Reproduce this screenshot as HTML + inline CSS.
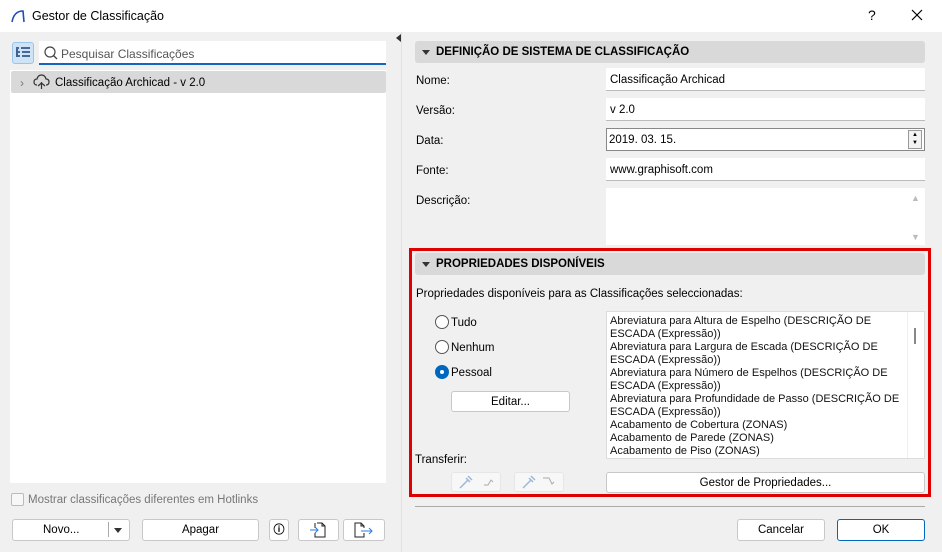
<!DOCTYPE html><html><head><style>
*{box-sizing:border-box;margin:0;padding:0}
body{width:942px;height:552px;background:#f0f0f0;font-family:"Segoe UI","Liberation Sans",sans-serif;font-size:12px;color:#000;position:relative;overflow:hidden}
.a{position:absolute}
.tb{left:0;top:0;width:942px;height:32px;background:#fff}
.fld{background:#fff;border-bottom:1px solid #bbb;height:23px;padding:6px 4px 0;font-size:11.5px}
.hdr{background:#d9d9d9;height:22px;border-radius:3px;font-weight:bold;font-size:11.5px;padding:5px 0 0 21px}
.hdr:before{content:"";position:absolute;left:7px;top:9px;border-left:4px solid transparent;border-right:4px solid transparent;border-top:5px solid #333}
.btn{background:#fff;border:1px solid #c8c8c8;border-radius:3px;text-align:center;font-size:11.5px;line-height:21px}
.lbl{font-size:11.5px;margin-top:2px}
.rad{width:14px;height:14px;border:1px solid #555;border-radius:50%;background:#fff}
</style></head><body>
<div class="a tb"></div>
<svg class="a" style="left:10px;top:8px" width="16" height="16"><path d="M2 14 Q4 3 13 3 L14 14" fill="none" stroke="#1f4fb5" stroke-width="1.6"/></svg>
<div class="a" style="left:32px;top:9px;font-size:12.5px">Gestor de Classificação</div>
<div class="a" style="left:868px;top:7px;font-size:14px">?</div>
<svg class="a" style="left:911px;top:9px" width="12" height="12"><path d="M1 1L11 11M11 1L1 11" stroke="#000" stroke-width="1.2"/></svg>

<div class="a" style="left:12px;top:42px;width:22px;height:22px;background:#cfe3f7;border:1px solid #9cc3ea;border-radius:3px"></div>
<svg class="a" style="left:15px;top:46px" width="16" height="14"><path d="M1 2h3M6 2h9M3 6h2M7 6h8M3 10h2M7 10h8M2 3v8" stroke="#1d3f73" stroke-width="1.6"/></svg>
<div class="a" style="left:39px;top:41px;width:347px;height:24px;background:#fff;border-bottom:2px solid #1565c0"></div>
<svg class="a" style="left:43px;top:45px" width="16" height="16"><circle cx="7" cy="7" r="5" fill="none" stroke="#444" stroke-width="1.2"/><path d="M10.5 10.5L14 14" stroke="#444" stroke-width="1.3"/></svg>
<div class="a" style="left:61px;top:47px;color:#555;font-size:12px">Pesquisar Classificações</div>
<div class="a" style="left:10px;top:70px;width:376px;height:413px;background:#fff"></div>
<div class="a" style="left:11px;top:71px;width:375px;height:22px;background:#d9d9d9;border-radius:2px"></div>
<div class="a" style="left:20px;top:76px;color:#777">›</div>
<svg class="a" style="left:33px;top:74px" width="17" height="16"><path d="M8.5 15V8M5 12L8.5 9L12 12M4 11Q1 11 1 8Q1 5 4 5Q5 1 8.5 1Q12 1 13 5Q16 5 16 8Q16 11 13 11" fill="none" stroke="#333" stroke-width="1.2"/></svg>
<div class="a" style="left:55px;top:77px;font-size:11.5px">Classificação Archicad - v 2.0</div>

<div class="a" style="left:11px;top:493px;width:13px;height:13px;border:1px solid #bbb;border-radius:2px;background:#f7f7f7"></div>
<div class="a" style="left:28px;top:494px;color:#777;font-size:11.5px">Mostrar classificações diferentes em Hotlinks</div>
<div class="a btn" style="left:12px;top:519px;width:118px;height:22px;text-align:left;padding-left:30px">Novo...</div>
<div class="a" style="left:108px;top:522px;width:1px;height:15px;background:#aaa"></div>
<div class="a" style="left:114px;top:528px;border-left:4px solid transparent;border-right:4px solid transparent;border-top:5px solid #333"></div>
<div class="a btn" style="left:142px;top:519px;width:117px;height:22px">Apagar</div>
<div class="a btn" style="left:269px;top:519px;width:20px;height:22px;font-weight:bold;font-size:11px">ⓘ</div>
<div class="a btn" style="left:298px;top:519px;width:41px;height:22px"></div>
<svg class="a" style="left:308px;top:521px" width="20" height="18"><path d="M9 2h5l3 3v11H7v-4M14 2v3h3M7 2v5" fill="none" stroke="#222"/><path d="M2 9h8M7 6l3 3-3 3" fill="none" stroke="#2b7de0"/></svg>
<div class="a btn" style="left:343px;top:519px;width:42px;height:22px"></div>
<svg class="a" style="left:352px;top:521px" width="22" height="18"><path d="M12 12v4H3V2h6l3 3v2M9 2v3h3" fill="none" stroke="#222"/><path d="M9 10h11M17 7l3 3-3 3" fill="none" stroke="#2b7de0"/></svg>

<div class="a" style="left:396px;top:34px;border-top:4px solid transparent;border-bottom:4px solid transparent;border-right:5px solid #333"></div>
<div class="a" style="left:401px;top:32px;width:1px;height:520px;background:#e2e2e2"></div>

<div class="a hdr" style="left:415px;top:41px;width:510px">DEFINIÇÃO DE SISTEMA DE CLASSIFICAÇÃO</div>
<div class="a lbl" style="left:416px;top:73px">Nome:</div>
<div class="a fld" style="left:606px;top:68px;width:319px">Classificação Archicad</div>
<div class="a lbl" style="left:416px;top:103px">Versão:</div>
<div class="a fld" style="left:606px;top:98px;width:319px">v 2.0</div>
<div class="a lbl" style="left:416px;top:133px">Data:</div>
<div class="a fld" style="left:606px;top:128px;width:319px;border:1px solid #888;padding-left:2px;padding-top:5px">2019. 03. 15.</div>
<div class="a" style="left:908px;top:130px;width:14px;height:19px;border:1px solid #999;background:#f3f3f3;font-size:6px;line-height:8px;text-align:center">▲<br>▼</div>
<div class="a lbl" style="left:416px;top:163px">Fonte:</div>
<div class="a fld" style="left:606px;top:158px;width:319px">www.graphisoft.com</div>
<div class="a lbl" style="left:416px;top:193px">Descrição:</div>
<div class="a" style="left:606px;top:188px;width:319px;height:57px;background:#fff"></div>
<div class="a" style="left:911px;top:193px;color:#bbb;font-size:9px">▲</div>
<div class="a" style="left:911px;top:232px;color:#bbb;font-size:9px">▼</div>

<div class="a" style="left:409px;top:248px;width:522px;height:249px;border:3px solid #e00000"></div>
<div class="a hdr" style="left:415px;top:253px;width:510px">PROPRIEDADES DISPONÍVEIS</div>
<div class="a lbl" style="left:416px;top:286px">Propriedades disponíveis para as Classificações seleccionadas:</div>
<div class="a rad" style="left:435px;top:315px"></div><div class="a lbl" style="left:451px;top:315px">Tudo</div>
<div class="a rad" style="left:435px;top:340px"></div><div class="a lbl" style="left:451px;top:340px">Nenhum</div>
<div class="a rad" style="left:435px;top:365px;background:#0067c0;border-color:#0067c0"></div>
<div class="a" style="left:440px;top:370px;width:4px;height:4px;background:#fff;border-radius:50%"></div>
<div class="a lbl" style="left:451px;top:365px">Pessoal</div>
<div class="a btn" style="left:451px;top:391px;width:119px;height:21px">Editar...</div>
<div class="a lbl" style="left:415px;top:452px">Transferir:</div>
<div class="a btn" style="left:451px;top:472px;width:50px;height:20px;border-color:#e6e6e6;background:#f7f7f7"></div>
<div class="a btn" style="left:514px;top:472px;width:50px;height:20px;border-color:#e6e6e6;background:#f7f7f7"></div>
<svg class="a" style="left:458px;top:474px" width="40" height="16"><path d="M2 14l8-8M8 4l4 4M10 2l4 4" stroke="#9bb8d8" stroke-width="1.5"/><path d="M26 11h4l3-5 2 2" fill="none" stroke="#aaa"/></svg>
<svg class="a" style="left:521px;top:474px" width="40" height="16"><path d="M2 14l8-8M8 4l4 4M10 2l4 4" stroke="#9bb8d8" stroke-width="1.5"/><path d="M22 4h6l3 6 2-2" fill="none" stroke="#aaa"/></svg>
<div class="a" style="left:606px;top:311px;width:319px;height:148px;background:#fff;border:1px solid #ddd;overflow:hidden;font-size:11px;line-height:13px;padding:3px 3px;color:#111;white-space:nowrap">Abreviatura para Altura de Espelho (DESCRIÇÃO DE<br>ESCADA (Expressão))<br>Abreviatura para Largura de Escada (DESCRIÇÃO DE<br>ESCADA (Expressão))<br>Abreviatura para Número de Espelhos (DESCRIÇÃO DE<br>ESCADA (Expressão))<br>Abreviatura para Profundidade de Passo (DESCRIÇÃO DE<br>ESCADA (Expressão))<br>Acabamento de Cobertura (ZONAS)<br>Acabamento de Parede (ZONAS)<br>Acabamento de Piso (ZONAS)</div>
<div class="a" style="left:907px;top:312px;width:17px;height:146px;background:#fff;border-left:1px solid #eee"></div>
<div class="a" style="left:914px;top:328px;width:2px;height:16px;background:#888"></div>
<div class="a btn" style="left:606px;top:472px;width:319px;height:21px">Gestor de Propriedades...</div>

<div class="a" style="left:415px;top:506px;width:510px;height:1px;background:#aaa"></div>
<div class="a btn" style="left:737px;top:519px;width:88px;height:22px">Cancelar</div>
<div class="a btn" style="left:837px;top:519px;width:88px;height:22px;border-color:#0067c0">OK</div>
</body></html>
